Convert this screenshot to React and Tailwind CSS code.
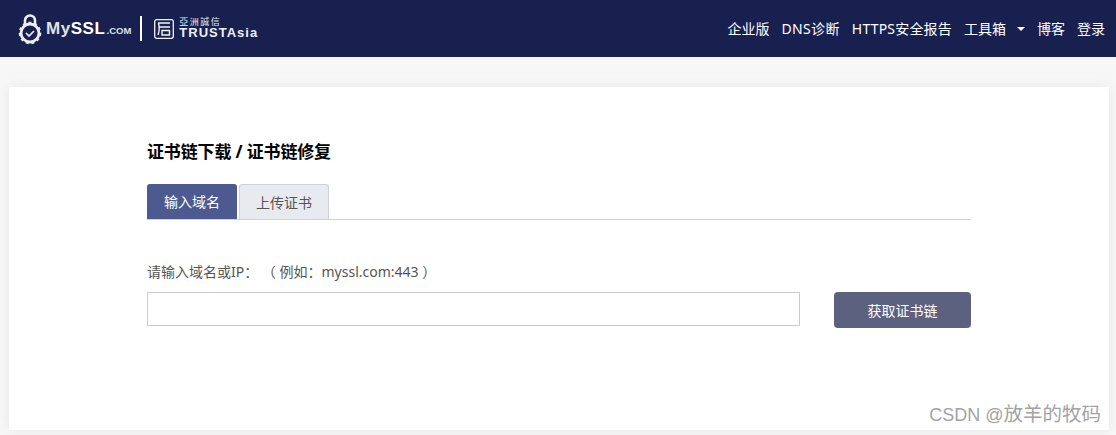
import React from "react";

const cjk = "font-['Noto_Sans','Noto_Sans_CJK_SC',sans-serif]";

function Logo() {
  return (
    <div className="flex items-center">
      {/* lock with check */}
      <svg width="24" height="32" viewBox="0 0 24 32" fill="none" stroke="#eceef3" className="mr-[4px]">
        <path d="M7 12V7.5a5 5 0 0 1 10 0V12" strokeWidth="2.6" />
        <circle cx="12" cy="20" r="9" strokeWidth="2.8" />
        <circle cx="12" cy="20" r="10.6" strokeWidth="1.4" strokeDasharray="3 3" />
        <path d="M8 20l3 3 5-5" strokeWidth="1.7" />
      </svg>
      <span className="font-['Liberation_Sans',sans-serif] text-[17px] font-bold tracking-[0.5px] text-[#dfe0e8]">My</span>
      <span className="font-['Liberation_Sans',sans-serif] text-[17px] font-bold tracking-[0.6px] text-white">SSL</span>
      <span className="font-['Liberation_Sans',sans-serif] text-[9.5px] font-bold mt-[5px] ml-[1px] text-[#dfe0e8]">.COM</span>
      <div className="w-[2px] h-[25px] bg-white ml-[9px] mr-[12px]" />
      <svg width="20" height="20" viewBox="0 0 20 20" fill="none" stroke="#f2f3f7" className="mr-[5px]">
        <rect x="0.7" y="0.7" width="18.6" height="18.6" rx="2" strokeWidth="1.3" />
        <path d="M4 4H16M4.5 4C5.5 8 5.5 12 4 16M5 8H16M8 11.5H15.5V16H8Z" strokeWidth="1.4" />
      </svg>
      <div className="flex flex-col text-[#eef0f5] -mt-[2px]">
        <span className="font-['Noto_Sans_CJK_TC',sans-serif] text-[9px] h-[10px] tracking-[1.5px] leading-[10px]">亞洲誠信</span>
        <span className="font-['Liberation_Sans',sans-serif] text-[13px] h-[12px] leading-[12px] font-bold tracking-[1px]">TRUSTAsia</span>
      </div>
    </div>
  );
}

function Nav() {
  return (
    <nav className="flex items-center gap-3 text-[14px] text-white">
      <a>企业版</a>
      <a className="tracking-[0.35px]">DNS诊断</a>
      <a className="tracking-[0.2px]">HTTPS安全报告</a>
      <a className="flex items-center">
        工具箱
        <span className="ml-[11px] border-x-[4px] border-t-[4px] border-x-transparent border-t-white" />
      </a>
      <a>博客</a>
      <a>登录</a>
    </nav>
  );
}

export default function App() {
  return (
    <div className={`relative h-[435px] overflow-hidden bg-[#f7f7f7] ${cjk}`}>
      <header className="h-[57px] bg-[#182050] flex items-center justify-between pl-[18px] pr-[11px]">
        <Logo />
        <Nav />
      </header>

      <main className="mx-[9px] mt-[30px] w-[1100px] h-[343px] bg-white shadow-[0_0_12px_rgba(0,0,0,0.07)] pt-[54px] px-[138px]">
        <h1 className="text-[17px] leading-[22px] font-bold tracking-[-0.15px] text-black">证书链下载 / 证书链修复</h1>

        <div className="flex gap-[2px] mt-[21px] h-[36px] border-b border-[#d0d1dc] items-start">
          <button className="w-[90px] h-[35px] bg-[#4d5a8f] text-white text-[14px] rounded-t-[3px]">输入域名</button>
          <button className="w-[90px] h-[35px] bg-[#e9eaf0] text-[#555] text-[14px] rounded-t-[3px] border border-b-0 border-[#cfd1de]">上传证书</button>
        </div>

        <p className="mt-[42px] text-[14px] leading-[20px] text-[#555] whitespace-pre">请输入域名或IP： （ 例如：myssl.com:443 ）</p>

        <div className="flex items-start justify-between mt-[10px]">
          <input className="w-[653px] h-[34px] border border-[#ccc] bg-white outline-none" />
          <button className="w-[137px] h-[36px] rounded-[4px] bg-[#5d6180] text-white text-[14px]">获取证书链</button>
        </div>
      </main>

      <div className="absolute right-[15px] bottom-[8px] leading-[24px] text-[#a3a3a3] flex items-baseline">
        <span className="font-['Liberation_Sans',sans-serif] text-[18px] whitespace-pre">CSDN @</span>
        <span className="text-[19.5px]">放羊的牧码</span>
      </div>
    </div>
  );
}
